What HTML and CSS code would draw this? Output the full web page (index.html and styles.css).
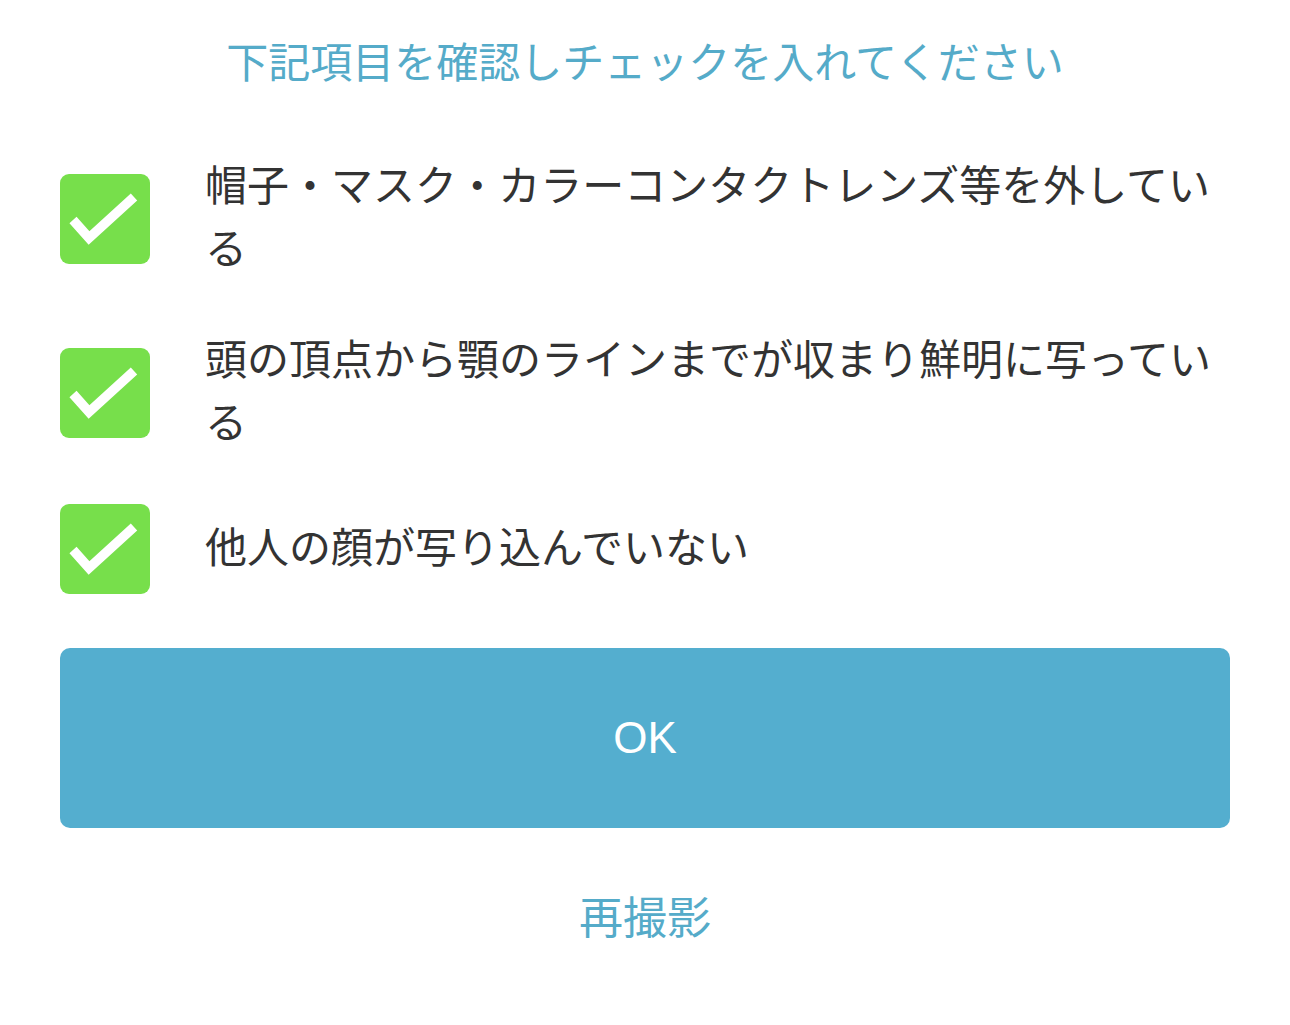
FILE: index.html
```html
<!DOCTYPE html>
<html lang="ja">
<head>
<meta charset="utf-8">
<link rel="stylesheet" href="styles.css">
</head>
<body>
<div class="page">
  <h1 class="title">下記項目を確認しチェックを入れてください</h1>
  <ul class="checks">
    <li class="row">
      <span class="box"><svg viewBox="0 0 90 90" width="90" height="90"><polyline points="13,46 29,64 74,23" fill="none" stroke="#fff" stroke-width="9.5"/></svg></span>
      <span class="label">帽子・マスク・カラーコンタクトレンズ等を外している</span>
    </li>
    <li class="row row2">
      <span class="box"><svg viewBox="0 0 90 90" width="90" height="90"><polyline points="13,46 29,64 74,23" fill="none" stroke="#fff" stroke-width="9.5"/></svg></span>
      <span class="label">頭の頂点から顎のラインまでが収まり鮮明に写っている</span>
    </li>
    <li class="row row3">
      <span class="box"><svg viewBox="0 0 90 90" width="90" height="90"><polyline points="13,46 29,64 74,23" fill="none" stroke="#fff" stroke-width="9.5"/></svg></span>
      <span class="label">他人の顔が写り込んでいない</span>
    </li>
  </ul>
  <button class="ok">OK</button>
  <div class="retake">再撮影</div>
</div>
</body>
</html>
```
FILE: styles.css
```css
html, body {
  margin: 0;
  padding: 0;
  background: #fff;
}
body {
  font-family: "Noto Sans CJK JP", "Noto Sans", sans-serif;
  color: #333;
}
.page {
  width: 1170px;
  padding: 0 60px;
}
.title {
  margin: 28px 0 0;
  font-size: 42px;
  line-height: 63px;
  font-weight: 400;
  color: #55abc9;
  text-align: center;
}
.checks {
  list-style: none;
  margin: 60px 0 0;
  padding: 0;
}
.row {
  display: flex;
  align-items: center;
  gap: 55px;
}
.row2 {
  margin-top: 38px;
}
.row3 {
  margin-top: 43px;
}
.box {
  flex: none;
  width: 90px;
  height: 90px;
  border-radius: 9px;
  background: #77df4b;
  display: block;
}
.box svg {
  display: block;
}
.label {
  font-size: 42px;
  line-height: 63px;
  padding-bottom: 10px;
  color: #333;
  flex: 1;
}
.ok {
  display: block;
  width: 1170px;
  height: 180px;
  margin-top: 54px;
  border: none;
  border-radius: 10px;
  background: #54aecf;
  color: #fff;
  font-family: "Liberation Sans", "Noto Sans", sans-serif;
  font-size: 44px;
  padding: 0;
}
.retake {
  margin-top: 56px;
  text-align: center;
  font-size: 44px;
  line-height: 63px;
  color: #55abc9;
}
```
